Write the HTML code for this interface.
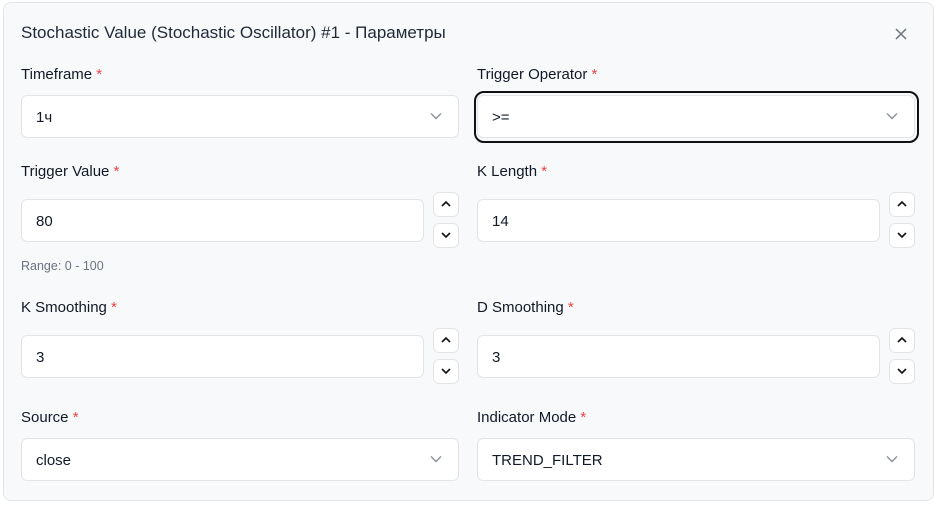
<!DOCTYPE html>
<html><head><meta charset="utf-8"><style>
*{box-sizing:border-box}
body{margin:0;width:940px;height:508px;background:#fff;font-family:"Liberation Sans","Noto Sans CJK SC",sans-serif;color:#111827;position:relative;overflow:hidden}
.card{position:absolute;left:3px;top:2px;width:931px;height:499px;background:#f8f9fb;border:1px solid #e3e5e9;border-radius:8px}
.abs{position:absolute}
.title{left:21px;top:23px;font-size:17px;color:#1f2937}
.lbl{font-size:15px;color:#111827}
.lbl b{color:#ef4444;font-weight:normal}
.inp{background:#fff;border:1px solid #e2e4e8;border-radius:6px;height:43px;font-size:15px;padding-left:14px;line-height:43px}
.chev{position:absolute;right:16px;top:16px}
.btn{background:#fff;border:1px solid #e2e4e8;border-radius:6px;width:26px;height:25px}
.btn svg{position:absolute;left:6px;top:6px}
.focus{border:2px solid #111;border-radius:10px}
</style></head><body>
<div class="card"></div>
<div class="abs title">Stochastic Value (Stochastic Oscillator) #1 - Параметры</div>
<svg class="abs" style="left:894px;top:27px" width="14" height="14" viewBox="0 0 14 14"><path d="M2 2L12 12M12 2L2 12" stroke="#6b7280" stroke-width="1.5"/></svg>

<div class="abs lbl" style="left:21px;top:66px">Timeframe <b>*</b></div>
<div class="abs inp" style="left:21px;top:95px;width:438px">1ч<svg class="chev" width="12" height="8" viewBox="0 0 12 8"><path d="M1 1.5L6 6.5L11 1.5" stroke="#8a8f98" stroke-width="1.4" fill="none"/></svg></div>

<div class="abs lbl" style="left:477px;top:66px">Trigger Operator <b>*</b></div>
<div class="abs focus" style="left:474px;top:91px;width:445px;height:52px"></div>
<div class="abs inp" style="left:477px;top:95px;width:438px">&gt;=<svg class="chev" width="12" height="8" viewBox="0 0 12 8"><path d="M1 1.5L6 6.5L11 1.5" stroke="#8a8f98" stroke-width="1.4" fill="none"/></svg></div>

<div class="abs lbl" style="left:21px;top:163px">Trigger Value <b>*</b></div>
<div class="abs inp" style="left:21px;top:199px;width:403px">80</div>
<div class="abs btn" style="left:433px;top:192px"><svg width="12" height="10" viewBox="0 0 12 10"><path d="M2 7L6 3L10 7" stroke="#111" stroke-width="1.6" fill="none"/></svg></div>
<div class="abs btn" style="left:433px;top:223px"><svg width="12" height="10" viewBox="0 0 12 10"><path d="M2 3L6 7L10 3" stroke="#111" stroke-width="1.6" fill="none"/></svg></div>
<div class="abs" style="left:21px;top:259px;font-size:12.5px;color:#6b7280">Range: 0 - 100</div>

<div class="abs lbl" style="left:477px;top:163px">K Length <b>*</b></div>
<div class="abs inp" style="left:477px;top:199px;width:403px">14</div>
<div class="abs btn" style="left:889px;top:192px"><svg width="12" height="10" viewBox="0 0 12 10"><path d="M2 7L6 3L10 7" stroke="#111" stroke-width="1.6" fill="none"/></svg></div>
<div class="abs btn" style="left:889px;top:223px"><svg width="12" height="10" viewBox="0 0 12 10"><path d="M2 3L6 7L10 3" stroke="#111" stroke-width="1.6" fill="none"/></svg></div>

<div class="abs lbl" style="left:21px;top:299px">K Smoothing <b>*</b></div>
<div class="abs inp" style="left:21px;top:335px;width:403px">3</div>
<div class="abs btn" style="left:433px;top:328px"><svg width="12" height="10" viewBox="0 0 12 10"><path d="M2 7L6 3L10 7" stroke="#111" stroke-width="1.6" fill="none"/></svg></div>
<div class="abs btn" style="left:433px;top:359px"><svg width="12" height="10" viewBox="0 0 12 10"><path d="M2 3L6 7L10 3" stroke="#111" stroke-width="1.6" fill="none"/></svg></div>

<div class="abs lbl" style="left:477px;top:299px">D Smoothing <b>*</b></div>
<div class="abs inp" style="left:477px;top:335px;width:403px">3</div>
<div class="abs btn" style="left:889px;top:328px"><svg width="12" height="10" viewBox="0 0 12 10"><path d="M2 7L6 3L10 7" stroke="#111" stroke-width="1.6" fill="none"/></svg></div>
<div class="abs btn" style="left:889px;top:359px"><svg width="12" height="10" viewBox="0 0 12 10"><path d="M2 3L6 7L10 3" stroke="#111" stroke-width="1.6" fill="none"/></svg></div>

<div class="abs lbl" style="left:21px;top:409px">Source <b>*</b></div>
<div class="abs inp" style="left:21px;top:438px;width:438px">close<svg class="chev" width="12" height="8" viewBox="0 0 12 8"><path d="M1 1.5L6 6.5L11 1.5" stroke="#8a8f98" stroke-width="1.4" fill="none"/></svg></div>

<div class="abs lbl" style="left:477px;top:409px">Indicator Mode <b>*</b></div>
<div class="abs inp" style="left:477px;top:438px;width:438px">TREND_FILTER<svg class="chev" width="12" height="8" viewBox="0 0 12 8"><path d="M1 1.5L6 6.5L11 1.5" stroke="#8a8f98" stroke-width="1.4" fill="none"/></svg></div>
</body></html>
